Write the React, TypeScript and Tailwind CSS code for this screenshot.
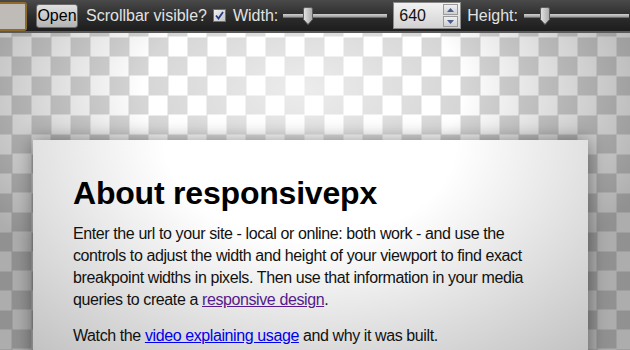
import React from "react";

function Thumb() {
  return (
    <svg width="10" height="18" viewBox="0 0 10 18" className="block">
      <defs>
        <linearGradient id="tg" x1="0" y1="0" x2="1" y2="0">
          <stop offset="0" stopColor="#e4e4e4" />
          <stop offset="1" stopColor="#a9a9a9" />
        </linearGradient>
      </defs>
      <path
        d="M0.5 2 Q0.5 0.5 2 0.5 H8 Q9.5 0.5 9.5 2 V12.5 L5 17.5 L0.5 12.5 Z"
        fill="url(#tg)"
        stroke="#5e5e5e"
      />
    </svg>
  );
}

function Slider({ width, at }: { width: number; at: number }) {
  return (
    <div className="relative h-[18px] flex items-center" style={{ width }}>
      <div className="w-full h-[4px] bg-gradient-to-b from-[#d2d2d2] to-[#9c9c9c] border-b border-[#6c6c6c]" />
      <div className="absolute top-0" style={{ left: at }}>
        <Thumb />
      </div>
    </div>
  );
}

function Spinner() {
  return (
    <div className="flex flex-col gap-px">
      <div className="w-[15px] h-[11px] flex items-center justify-center border border-[#9a9a9a] bg-gradient-to-b from-[#f0f0f0] to-[#cfcfcf]">
        <svg width="7" height="4" viewBox="0 0 7 4">
          <path d="M0 4 L3.5 0 L7 4 Z" fill="#485a92" />
        </svg>
      </div>
      <div className="w-[15px] h-[11px] flex items-center justify-center border border-[#9a9a9a] bg-gradient-to-b from-[#f0f0f0] to-[#cfcfcf]">
        <svg width="7" height="4" viewBox="0 0 7 4">
          <path d="M0 0 L3.5 4 L7 0 Z" fill="#485a92" />
        </svg>
      </div>
    </div>
  );
}

function Toolbar() {
  return (
    <div className="h-[33px] flex items-center text-[16px] text-[#e2e2e2] bg-gradient-to-b from-[#4a4a4a] via-[#2e2e2e] to-[#1d1d1d] border-b-2 border-[#5a5a5a]">
      <div className="w-[27px] h-[29px] mt-[1px] bg-[#bfbcb8] border-2 border-l-0 border-[#8e6b2c] rounded-r-[3px]" />
      <button className="ml-[9px] w-[42px] h-[24px] border border-[#6a6a6a] rounded-[3px] bg-gradient-to-b from-[#e0e0e0] to-[#b4b4b4] text-black text-[16px] leading-none">
        Open
      </button>
      <span className="ml-[8px]">Scrollbar visible?</span>
      <div className="ml-[6px] w-[13px] h-[13px] border border-[#6e6e6e] bg-gradient-to-br from-[#f2f2f2] to-[#c4c4c4] flex items-center justify-center">
        <svg width="9" height="9" viewBox="0 0 9 9">
          <path d="M1 4.5 L3.5 7.5 L8 1" fill="none" stroke="#253a86" strokeWidth="1.8" />
        </svg>
      </div>
      <span className="ml-[7px]">Width:</span>
      <div className="ml-[5px]">
        <Slider width={104} at={20} />
      </div>
      <div className="ml-[6px] w-[68px] h-[27px] border border-[#8a8a8a] bg-gradient-to-b from-[#f2f2f2] to-[#d2d2d2] flex items-center justify-between pl-[5px] pr-[2px]">
        <span className="text-[#111]">640</span>
        <Spinner />
      </div>
      <span className="ml-[6px]">Height:</span>
      <div className="ml-[6px]">
        <Slider width={105} at={16} />
      </div>
    </div>
  );
}

export default function App() {
  return (
    <div className="w-[630px] h-[350px] overflow-hidden font-['Liberation_Sans',Arial,sans-serif]">
      <Toolbar />
      <div className="h-[317px] bg-[conic-gradient(#d6d6d6_25%,#ffffff_0_50%,#d6d6d6_0_75%,#ffffff_0)] bg-[length:39px_39px] bg-[position:-7.5px_-15.5px]">
        <div className="h-full pt-[107px] bg-[radial-gradient(ellipse_60%_70%_at_48%_18%,rgba(255,255,255,0.55)_0%,rgba(255,255,255,0)_42%,rgba(0,0,0,0.32)_100%)]">
          <div className="ml-[33px] w-[555px] h-[260px] pt-[35px] px-[40px] text-[#111] shadow-[0_0_18px_rgba(0,0,0,0.45)] bg-[radial-gradient(ellipse_75%_110%_at_50%_0%,#ffffff_35%,#c2c2c2_100%)]">
            <h1 className="text-[32px] font-bold leading-[37px] text-black tracking-[-0.2px]">About responsivepx</h1>
            <p className="mt-[11px] text-[16px] leading-[22px] tracking-[-0.4px]">
              Enter the url to your site - local or online: both work - and use the controls to adjust the
              width and height of your viewport to find exact breakpoint widths in pixels. Then use that
              information in your media queries to create a{" "}
              <a href="#" className="text-[#551a8b] underline">
                responsive design
              </a>
              .
            </p>
            <p className="mt-[14px] text-[16px] leading-[22px] tracking-[-0.4px]">
              Watch the{" "}
              <a href="#" className="text-[#0000ee] underline">
                video explaining usage
              </a>{" "}
              and why it was built.
            </p>
          </div>
        </div>
      </div>
    </div>
  );
}
